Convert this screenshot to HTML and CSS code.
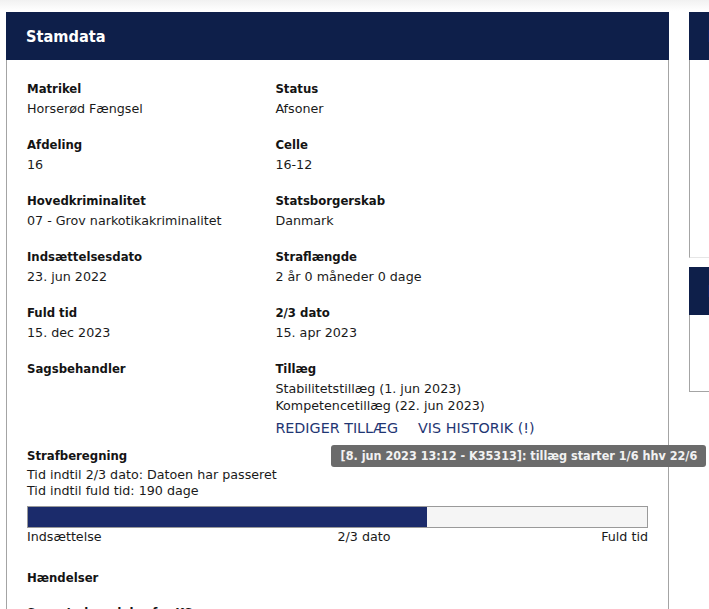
FILE: index.html
```html
<!DOCTYPE html>
<html lang="da">
<head>
<meta charset="utf-8">
<title>Stamdata</title>
<link rel="stylesheet" href="styles.css">
</head>
<body>
<div class="page">
  <section class="card main-card">
    <header class="card-header"><h2>Stamdata</h2></header>
    <div class="card-body">
      <div class="grid">
        <div class="field"><div class="label">Matrikel</div><div class="value">Horserød Fængsel</div></div>
        <div class="field"><div class="label">Status</div><div class="value">Afsoner</div></div>
        <div class="field"><div class="label">Afdeling</div><div class="value">16</div></div>
        <div class="field"><div class="label">Celle</div><div class="value">16-12</div></div>
        <div class="field"><div class="label">Hovedkriminalitet</div><div class="value">07 - Grov narkotikakriminalitet</div></div>
        <div class="field"><div class="label">Statsborgerskab</div><div class="value">Danmark</div></div>
        <div class="field"><div class="label">Indsættelsesdato</div><div class="value">23. jun 2022</div></div>
        <div class="field"><div class="label">Straflængde</div><div class="value">2 år 0 måneder 0 dage</div></div>
        <div class="field"><div class="label">Fuld tid</div><div class="value">15. dec 2023</div></div>
        <div class="field"><div class="label">2/3 dato</div><div class="value">15. apr 2023</div></div>
        <div class="field last"><div class="label">Sagsbehandler</div></div>
        <div class="field last">
          <div class="label">Tillæg</div>
          <div class="value">Stabilitetstillæg (1. jun 2023)</div>
          <div class="value">Kompetencetillæg (22. jun 2023)</div>
          <div class="links">
            <a class="link" href="#">REDIGER TILLÆG</a>
            <a class="link" href="#">VIS HISTORIK <span class="bang">(!)</span></a>
            <div class="tooltip">[8. jun 2023 13:12 - K35313]: tillæg starter 1/6 hhv 22/6</div>
          </div>
        </div>
      </div>

      <div class="section">
        <div class="label">Strafberegning</div>
        <div class="calc">Tid indtil 2/3 dato: Datoen har passeret</div>
        <div class="calc">Tid indtil fuld tid: 190 dage</div>
        <div class="progress"><div class="progress-fill" style="width: 64.5%"></div></div>
        <div class="progress-labels"><span>Indsættelse</span><span>2/3 dato</span><span>Fuld tid</span></div>
      </div>

      <div class="section events">
        <div class="label">Hændelser</div>
        <div class="label sub">Seneste hændelse fra KS</div>
      </div>
    </div>
  </section>

  <div class="side">
    <section class="card side-card first">
      <header class="card-header"><h2 class="side-title">Noter</h2></header>
      <div class="card-body side-body tall"></div>
    </section>
    <section class="card side-card">
      <header class="card-header"><h2 class="side-title">Kontakt</h2></header>
      <div class="card-body side-body short"></div>
    </section>
  </div>
</div>
</body>
</html>
```

FILE: styles.css
```css
html, body {
  margin: 0;
  padding: 0;
}
body {
  width: 709px;
  height: 609px;
  overflow: hidden;
  background: linear-gradient(to bottom, #f1f1f1 0, #ffffff 11px);
  font-family: "DejaVu Sans", sans-serif;
  font-size: 12.7px;
  color: #1a1a1a;
}
.page {
  display: flex;
  align-items: flex-start;
  gap: 20px;
  padding: 12px 0 0 6px;
}
.card-header {
  background: #0e1f4a;
  height: 48px;
  display: flex;
  align-items: center;
  padding: 0 20px;
}
.card-header h2 {
  margin: 0;
  color: #ffffff;
  font-family: "DejaVu Sans Condensed", "DejaVu Sans", sans-serif;
  font-size: 16.2px;
  font-weight: bold;
}
.main-card {
  width: 663px;
  flex: none;
}
.card-body {
  border-left: 1px solid #a4a4a4;
  border-right: 1px solid #a4a4a4;
  background: #ffffff;
  padding: 20px 20px 0 20px;
  height: 600px;
}
.grid {
  display: grid;
  grid-template-columns: 40% 60%;
}
.field {
  margin-bottom: 19px;
}
.field.last {
  margin-bottom: 0;
}
.label {
  font-family: "DejaVu Sans Condensed", "DejaVu Sans", sans-serif;
  font-size: 13px;
  font-weight: bold;
  line-height: 17px;
  margin-bottom: 3px;
  color: #141414;
}
.value {
  line-height: 17px;
  margin-top: 1px;
}
.value + .value {
  margin-top: 0;
}
.links {
  position: relative;
  display: flex;
  gap: 20px;
  margin-top: 4px;
  line-height: 20px;
  font-size: 14.3px;
}
.link {
  color: #1f3673;
  text-decoration: none;
}
.tooltip {
  position: absolute;
  left: 56px;
  top: 27px;
  width: 375px;
  height: 22px;
  box-sizing: border-box;
  background: #6b6b6b;
  color: #f2f2f2;
  border-radius: 3px;
  font-family: "DejaVu Sans Condensed", "DejaVu Sans", sans-serif;
  font-size: 12.5px;
  font-weight: bold;
  line-height: 22px;
  text-align: center;
  white-space: nowrap;
}
.section {
  margin-top: 9px;
}
.calc {
  line-height: 16px;
}
.section > .label + .calc {
  margin-top: 1px;
}
.progress {
  margin-top: 7px;
  height: 20px;
  border: 1px solid #9a9a9a;
  background: #f5f5f5;
}
.progress-fill {
  height: 100%;
  background: #1b2b6b;
}
.progress-labels {
  display: grid;
  grid-template-columns: 50% 1fr auto;
  line-height: 16px;
  margin-top: 1px;
}
.events {
  margin-top: 24px;
}
.events .sub {
  margin-top: 18px;
}
.side {
  width: 300px;
  flex: none;
  display: flex;
  flex-direction: column;
  gap: 9px;
}
.side-title {
  color: #3b8fe0 !important;
}
.side-card .card-header {
  padding-left: 19px;
}
.side-body {
  padding: 0;
  border-bottom: 1px solid #a4a4a4;
}
.side-body.tall {
  height: 197px;
  border-bottom-color: #e6e6e6;
}
.side-body.short {
  height: 76px;
}
```
